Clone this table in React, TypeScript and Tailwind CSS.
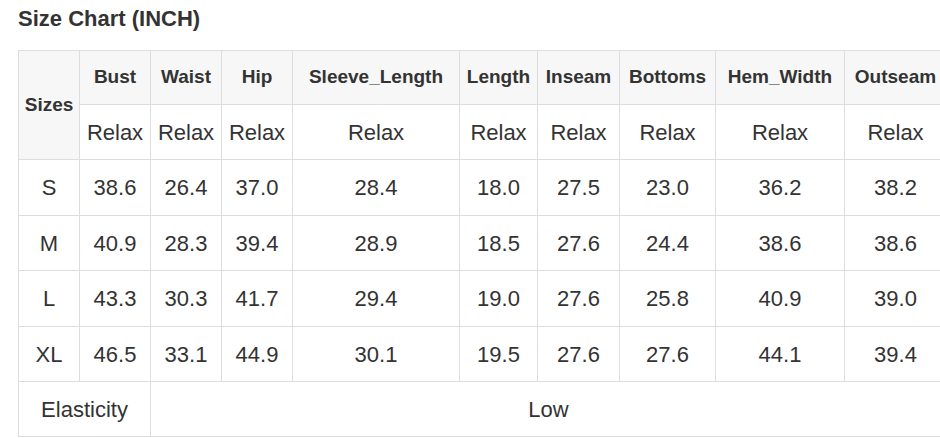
const cols = [
  { key: 'Bust', w: 'w-[71px]' },
  { key: 'Waist', w: 'w-[71px]' },
  { key: 'Hip', w: 'w-[71px]' },
  { key: 'Sleeve_Length', w: 'w-[167px]' },
  { key: 'Length', w: 'w-[78px]' },
  { key: 'Inseam', w: 'w-[82px]' },
  { key: 'Bottoms', w: 'w-[96px]' },
  { key: 'Hem_Width', w: 'w-[129px]' },
  { key: 'Outseam', w: 'w-[102px]' },
]

const rows: [string, string[], string][] = [
  ['S', ['38.6', '26.4', '37.0', '28.4', '18.0', '27.5', '23.0', '36.2', '38.2'], 'h-[56px]'],
  ['M', ['40.9', '28.3', '39.4', '28.9', '18.5', '27.6', '24.4', '38.6', '38.6'], 'h-[55px]'],
  ['L', ['43.3', '30.3', '41.7', '29.4', '19.0', '27.6', '25.8', '40.9', '39.0'], 'h-[56px]'],
  ['XL', ['46.5', '33.1', '44.9', '30.1', '19.5', '27.6', '27.6', '44.1', '39.4'], 'h-[55px]'],
]

const cell = 'border border-[#dddddd] text-center align-middle p-0'

export default function App() {
  return (
    <div className="w-[940px] h-[438px] overflow-hidden bg-white pl-[18px] pt-[7px] font-['Liberation_Sans',Arial,sans-serif] text-[#333333]">
      <h2 className="text-[22px] leading-[24px] font-bold">Size Chart (INCH)</h2>

      <table className="mt-[19px] w-[928px] table-fixed border-collapse">
        <colgroup>
          <col className="w-[61px]" />
          {cols.map((c) => (
            <col key={c.key} className={c.w} />
          ))}
        </colgroup>
        <thead>
          <tr className="h-[54px] bg-[#f7f7f7] text-[19px] font-bold">
            <th rowSpan={2} className={cell}>
              Sizes
            </th>
            {cols.map((c) => (
              <th key={c.key} className={cell}>
                {c.key}
              </th>
            ))}
          </tr>
          <tr className="h-[55px] bg-white text-[22px]">
            {cols.map((c) => (
              <td key={c.key} className={cell}>
                Relax
              </td>
            ))}
          </tr>
        </thead>
        <tbody className="text-[22px]">
          {rows.map(([size, vals, h]) => (
            <tr key={size} className={h}>
              <td className={cell}>{size}</td>
              {vals.map((v, i) => (
                <td key={i} className={cell}>
                  {v}
                </td>
              ))}
            </tr>
          ))}
          <tr className="h-[55px]">
            <td colSpan={2} className={cell}>
              Elasticity
            </td>
            <td colSpan={8} className={cell}>
              Low
            </td>
          </tr>
        </tbody>
      </table>
    </div>
  )
}
